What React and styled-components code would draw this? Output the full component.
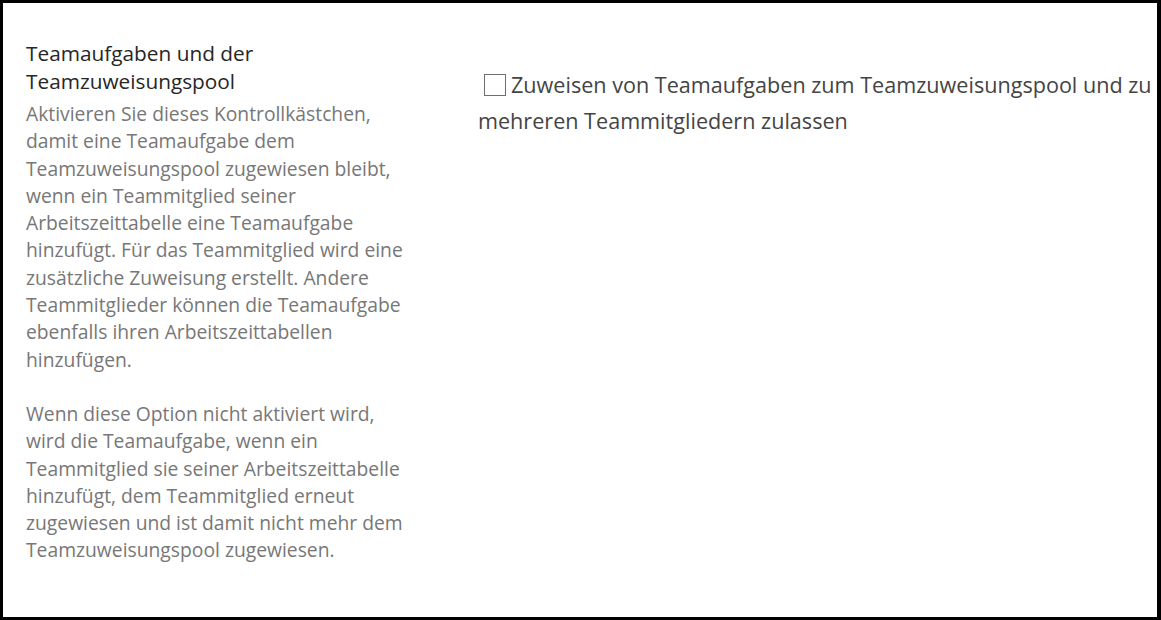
import React from 'react';
import styled, {createGlobalStyle} from 'styled-components';

const GlobalStyle = createGlobalStyle`
  html, body {
    margin: 0;
    padding: 0;
    background: #fff;
  }
  body {
    font-family: "Open Sans", "Noto Sans", sans-serif;
  }
`;

const Frame = styled.div`
  box-sizing: border-box;
  width: 1161px;
  height: 620px;
  border: 3px solid #000;
  border-right-width: 4px;
  display: grid;
  grid-template-columns: 452px 1fr;
  overflow: hidden;
`;

const Section = styled.div`
  padding: 36px 0 0 23px;
`;

const Title = styled.h3`
  margin: 0 0 5px;
  font-weight: 400;
  font-size: 20.8px;
  line-height: 28px;
  color: #262626;
`;

const Description = styled.p`
  margin: 0 0 27px;
  font-size: 19.3px;
  line-height: 27.3px;
  color: #777;
  white-space: nowrap;
`;

const Field = styled.div`
  padding: 64px 0 0 23px;
  overflow: hidden;
`;

const CheckRow = styled.label`
  display: block;
  font-size: 21.6px;
  line-height: 36px;
  color: #444;
  white-space: nowrap;
`;

const Box = styled.span`
  display: inline-block;
  box-sizing: border-box;
  width: 22px;
  height: 22px;
  margin: 0 5px 0 6px;
  border: 1px solid #6f6f6f;
  vertical-align: -3px;
`;

const lines = (text) =>
  text.map((line, i) => (
    <React.Fragment key={i}>
      {line}
      {i < text.length - 1 && <br />}
    </React.Fragment>
  ));

export default function App() {
  return (
    <>
      <GlobalStyle />
      <Frame>
        <Section>
          <Title>{lines(['Teamaufgaben und der', 'Teamzuweisungspool'])}</Title>
          <Description>
            {lines([
              'Aktivieren Sie dieses Kontrollkästchen,',
              'damit eine Teamaufgabe dem',
              'Teamzuweisungspool zugewiesen bleibt,',
              'wenn ein Teammitglied seiner',
              'Arbeitszeittabelle eine Teamaufgabe',
              'hinzufügt. Für das Teammitglied wird eine',
              'zusätzliche Zuweisung erstellt. Andere',
              'Teammitglieder können die Teamaufgabe',
              'ebenfalls ihren Arbeitszeittabellen',
              'hinzufügen.',
            ])}
          </Description>
          <Description>
            {lines([
              'Wenn diese Option nicht aktiviert wird,',
              'wird die Teamaufgabe, wenn ein',
              'Teammitglied sie seiner Arbeitszeittabelle',
              'hinzufügt, dem Teammitglied erneut',
              'zugewiesen und ist damit nicht mehr dem',
              'Teamzuweisungspool zugewiesen.',
            ])}
          </Description>
        </Section>
        <Field>
          <CheckRow>
            <Box />
            Zuweisen von Teamaufgaben zum Teamzuweisungspool und zu
            <br />
            mehreren Teammitgliedern zulassen
          </CheckRow>
        </Field>
      </Frame>
    </>
  );
}
